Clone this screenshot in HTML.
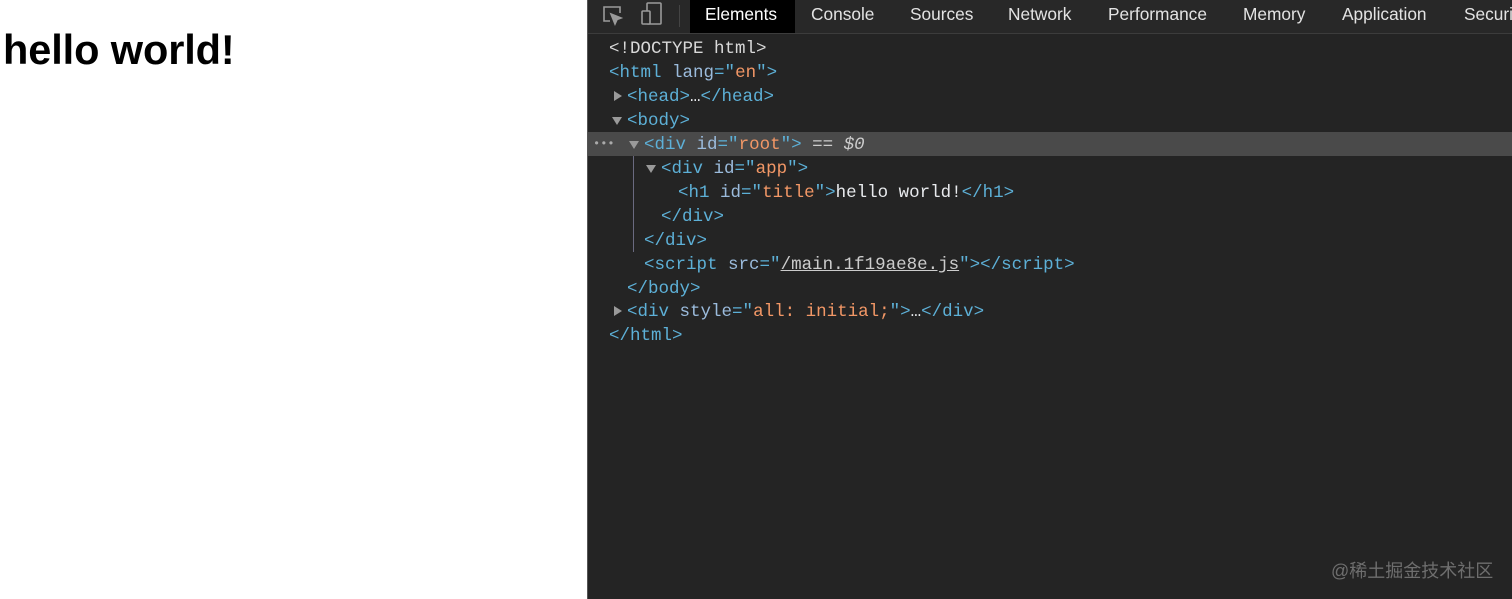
<!DOCTYPE html>
<html><head><meta charset="utf-8"><style>
*{margin:0;padding:0;box-sizing:border-box}
body{width:1512px;height:599px;overflow:hidden;background:#fff;position:relative;font-family:"Liberation Sans",Arial,sans-serif}
h1{position:absolute;left:3px;top:26px;font-size:41.5px;font-weight:bold;color:#000;letter-spacing:-0.1px}
#dt{position:absolute;left:587px;top:0;width:925px;height:599px;background:#242424;border-left:1px solid #555}
#tb{position:absolute;left:0;top:0;width:925px;height:34px;background:#282828;border-bottom:1px solid #3c3c3c}
.tab{position:absolute;top:0;height:33px;line-height:29px;font-size:17.3px;color:#e3e3e3;white-space:nowrap}
.sel{background:#000;color:#fff}
.ln{position:absolute;font-family:"Liberation Mono",monospace;font-size:17.5px;line-height:24px;white-space:pre;color:#d8d8d8}
.t{color:#5db0d7}.a{color:#9bbbdc}.v{color:#f29766}.w{color:#e8eaed}
.tri{position:absolute;width:0;height:0}
.r{border-left:8px solid #9a9a9a;border-top:5px solid transparent;border-bottom:5px solid transparent}
.d{border-top:8px solid #9a9a9a;border-left:5px solid transparent;border-right:5px solid transparent}
</style></head><body>
<h1>hello world!</h1>
<div id="dt">
<div id="tb">
<svg style="position:absolute;left:14px;top:5px" width="22" height="22" viewBox="0 0 22 22" fill="none" stroke="#9a9a9a" stroke-width="1.6"><path d="M8 16H2V2h16v6"/><path d="M9 9l10 4-4 1.5L13 19z" fill="#9a9a9a"/></svg>
<svg style="position:absolute;left:52px;top:2px" width="24" height="24" viewBox="0 0 24 24" fill="none" stroke="#9a9a9a" stroke-width="1.6"><rect x="7" y="1" width="14" height="21" rx="1"/><rect x="2" y="9" width="8" height="13" rx="1" fill="#282828"/></svg>
<div style="position:absolute;left:91px;top:5px;width:1px;height:22px;background:#444"></div>
<div class="tab sel" style="left:102px;width:105px;padding-left:15px">Elements</div>
<div class="tab" style="left:223px">Console</div>
<div class="tab" style="left:322px">Sources</div>
<div class="tab" style="left:420px">Network</div>
<div class="tab" style="left:520px">Performance</div>
<div class="tab" style="left:655px">Memory</div>
<div class="tab" style="left:754px">Application</div>
<div class="tab" style="left:876px">Securi</div>
</div>
<div style="position:absolute;left:0;top:132px;width:925px;height:24px;background:#4a4a4a"></div>
<div style="position:absolute;left:45px;top:156px;width:1px;height:96px;background:#6a6a80"></div>
<div class="ln" style="left:5px;top:132px;color:#aaa;font-size:12px">•••</div>
<div class="ln" style="left:21px;top:37px">&lt;!DOCTYPE html&gt;</div>
<div class="ln" style="left:21px;top:61px"><span class="t">&lt;html</span> <span class="a">lang</span><span class="t">="</span><span class="v">en</span><span class="t">"&gt;</span></div>
<div class="tri r" style="left:26px;top:91px"></div>
<div class="ln" style="left:39px;top:85px"><span class="t">&lt;head&gt;</span><span class="w">…</span><span class="t">&lt;/head&gt;</span></div>
<div class="tri d" style="left:24px;top:117px"></div>
<div class="ln" style="left:39px;top:109px"><span class="t">&lt;body&gt;</span></div>
<div class="tri d" style="left:41px;top:141px"></div>
<div class="ln" style="left:56px;top:133px"><span class="t">&lt;div</span> <span class="a">id</span><span class="t">="</span><span class="v">root</span><span class="t">"&gt;</span> <span style="color:#ccc">==</span> <i style="color:#ccc">$0</i></div>
<div class="tri d" style="left:58px;top:165px"></div>
<div class="ln" style="left:73px;top:157px"><span class="t">&lt;div</span> <span class="a">id</span><span class="t">="</span><span class="v">app</span><span class="t">"&gt;</span></div>
<div class="ln" style="left:90px;top:181px"><span class="t">&lt;h1</span> <span class="a">id</span><span class="t">="</span><span class="v">title</span><span class="t">"&gt;</span><span class="w">hello world!</span><span class="t">&lt;/h1&gt;</span></div>
<div class="ln" style="left:73px;top:205px"><span class="t">&lt;/div&gt;</span></div>
<div class="ln" style="left:56px;top:229px"><span class="t">&lt;/div&gt;</span></div>
<div class="ln" style="left:56px;top:253px"><span class="t">&lt;script</span> <span class="a">src</span><span class="t">="</span><span style="color:#ccc;text-decoration:underline">/main.1f19ae8e.js</span><span class="t">"&gt;&lt;/script&gt;</span></div>
<div class="ln" style="left:39px;top:277px"><span class="t">&lt;/body&gt;</span></div>
<div class="tri r" style="left:26px;top:306px"></div>
<div class="ln" style="left:39px;top:300px"><span class="t">&lt;div</span> <span class="a">style</span><span class="t">="</span><span class="v">all: initial;</span><span class="t">"&gt;</span><span class="w">…</span><span class="t">&lt;/div&gt;</span></div>
<div class="ln" style="left:21px;top:324px"><span class="t">&lt;/html&gt;</span></div>
<div style="position:absolute;left:743px;top:557px;font-size:18px;color:#6e6e6e;font-family:'Liberation Sans','Noto Sans CJK SC',sans-serif;white-space:nowrap">@稀土掘金技术社区</div>
</div>
</body></html>
